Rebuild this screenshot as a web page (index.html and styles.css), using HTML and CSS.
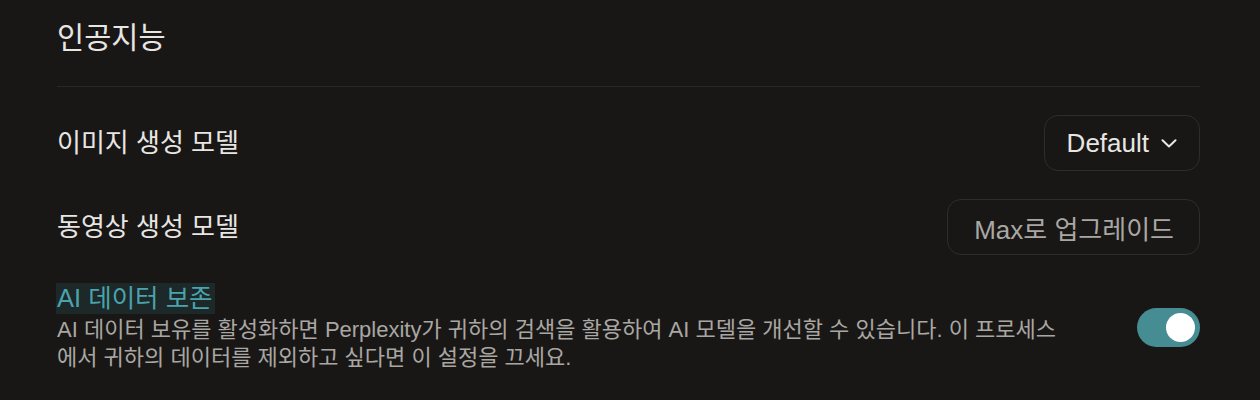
FILE: index.html
```html
<!DOCTYPE html>
<html lang="ko">
<head>
<meta charset="utf-8">
<link rel="stylesheet" href="styles.css">
</head>
<body>
<section class="panel">
  <h2 class="title">인공지능</h2>
  <div class="row">
    <span class="label">이미지 생성 모델</span>
    <button class="btn btn-primary">Default
      <svg class="chev" width="16" height="9" viewBox="0 0 16 9"><path d="M1.5 1.2 L8 7.5 L14.5 1.2" fill="none" stroke="#e8e6e3" stroke-width="2" stroke-linecap="round" stroke-linejoin="round"/></svg>
    </button>
  </div>
  <div class="row">
    <span class="label">동영상 생성 모델</span>
    <button class="btn btn-muted">Max로 업그레이드</button>
  </div>
  <div class="toggle-row">
    <div class="toggle-text">
      <div class="heading"><span class="hl">AI 데이터 보존</span></div>
      <p class="desc">AI 데이터 보유를 활성화하면 Perplexity가 귀하의 검색을 활용하여 AI 모델을 개선할 수 있습니다. 이 프로세스에서 귀하의 데이터를 제외하고 싶다면 이 설정을 끄세요.</p>
    </div>
    <div class="switch"><span class="knob"></span></div>
  </div>
</section>
</body>
</html>
```

FILE: styles.css
```css
html, body {
  margin: 0;
  padding: 0;
  background: #191716;
}
body {
  font-family: "Liberation Sans", "Noto Sans CJK KR", sans-serif;
  color: #e8e6e3;
  width: 1260px;
  height: 400px;
  overflow: hidden;
}
.panel {
  padding: 0 60px 0 57px;
}
.title {
  margin: 0;
  padding-top: 19px;
  padding-bottom: 30px;
  font-size: 29.5px;
  line-height: 37px;
  font-weight: 400;
  color: #e8e6e3;
  border-bottom: 1px solid #2a2826;
}
.row {
  display: flex;
  align-items: center;
  justify-content: space-between;
  margin-top: 28px;
  height: 56px;
}
.label {
  font-size: 26px;
  line-height: 34px;
  color: #e8e6e3;
}
.btn {
  font-family: inherit;
  font-size: 26px;
  height: 56px;
  background: transparent;
  border: 1px solid #2f2d2b;
  border-radius: 14px;
  display: flex;
  align-items: center;
  padding: 0 22px 0 22px;
  cursor: pointer;
}
.btn-primary {
  color: #e8e6e3;
  gap: 12px;
}
.btn-muted {
  color: #a9a7a3;
  padding: 0 25px 0 26px;
}
.chev {
  display: block;
  margin-top: 1px;
}
.toggle-row {
  display: flex;
  align-items: center;
  gap: 64px;
  margin-top: 28px;
}
.toggle-text {
  flex: 1;
}
.heading {
  font-size: 25.5px;
  line-height: 31px;
}
.hl {
  display: inline-block;
  background: #1d2828;
  color: #4aa3ad;
  margin-left: -1px;
  padding: 0 2px 0 1px;
}
.desc {
  margin: 2px 0 0;
  font-size: 22px;
  line-height: 28px;
  color: #a9a7a3;
}
.switch {
  flex: none;
  width: 63px;
  height: 39px;
  border-radius: 20px;
  background: #468c93;
  display: flex;
  align-items: center;
  justify-content: flex-end;
  padding-right: 5px;
  box-sizing: border-box;
}
.knob {
  width: 29px;
  height: 29px;
  border-radius: 50%;
  background: #ffffff;
}
```
